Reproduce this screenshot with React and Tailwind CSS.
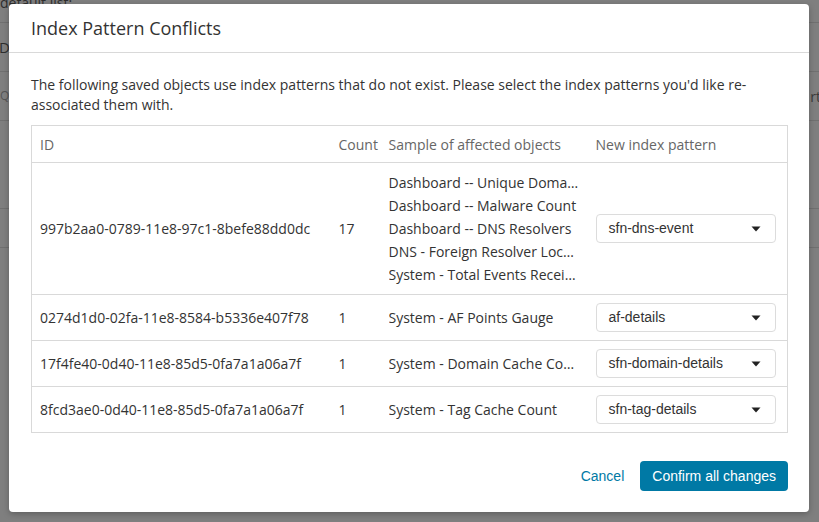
import React from "react";

const rows = [
  {
    id: "997b2aa0-0789-11e8-97c1-8befe88dd0dc",
    count: 17,
    samples: [
      "Dashboard -- Unique Domains Over Time",
      "Dashboard -- Malware Count",
      "Dashboard -- DNS Resolvers",
      "DNS - Foreign Resolver Locations",
      "System - Total Events Received",
    ],
    pattern: "sfn-dns-event",
  },
  {
    id: "0274d1d0-02fa-11e8-8584-b5336e407f78",
    count: 1,
    samples: ["System - AF Points Gauge"],
    pattern: "af-details",
  },
  {
    id: "17f4fe40-0d40-11e8-85d5-0fa7a1a06a7f",
    count: 1,
    samples: ["System - Domain Cache Count"],
    pattern: "sfn-domain-details",
  },
  {
    id: "8fcd3ae0-0d40-11e8-85d5-0fa7a1a06a7f",
    count: 1,
    samples: ["System - Tag Cache Count"],
    pattern: "sfn-tag-details",
  },
];

const Caret = () => (
  <svg width="10" height="6" viewBox="0 0 10 6" className="shrink-0">
    <path d="M0.5 0.5 L9.5 0.5 L5 5.5 Z" fill="#222" />
  </svg>
);

const PatternSelect = ({ value }) => (
  <div className="w-[180px] h-[29px] border border-[#dcdcdc] rounded-[4px] bg-white flex items-center justify-between pl-[12px] pr-[14px] font-['Liberation_Sans',Arial,sans-serif] text-[14px] text-[#333]">
    <span>{value}</span>
    <Caret />
  </div>
);

const App = () => {
  return (
    <div className="relative w-[819px] h-[522px] overflow-hidden bg-[#7f7f7f] font-['Open_Sans',sans-serif]">
      {/* page behind the overlay */}
      <div className="flex flex-col text-[#2e2e2e] text-[14px]">
        <div className="h-[25px] border-b border-[#707070] leading-[10px] -mt-[2px]">default list:</div>
        <div className="h-[49px] border-b border-[#707070] flex items-center justify-between">
          <span className="-ml-[1px] text-[15px]">D</span>
        </div>
        <div className="h-[49px] border-b border-[#707070] flex items-center justify-between">
          <span className="text-[12px] text-[#555]">Q</span>
          <span className="text-[#3a3a3a] mr-[-2px]">rt</span>
        </div>
        <div className="h-[88px] border-b border-[#707070]" />
        <div className="h-[39px] border-b border-[#707070]" />
      </div>

      {/* modal */}
      <div className="absolute left-[9px] top-[4px] w-[800px] h-[508px] bg-white rounded-[4px] shadow-[0_2px_6px_rgba(0,0,0,0.25)] flex flex-col">
        <div className="h-[49px] border-b border-[#d9d9d9] flex items-center px-[22px]">
          <h2 className="text-[18px] text-[#333]">Index Pattern Conflicts</h2>
        </div>

        <div className="px-[22px] pt-[22px] flex-1">
          <p className="text-[14px] leading-[20px] text-[#333] pr-[20px]">
            The following saved objects use index patterns that do not exist. Please select the index patterns you'd like re-associated them with.
          </p>

          <table className="mt-[10px] w-[757px] border border-[#d9d9d9] border-collapse text-[14px] table-fixed">
            <thead>
              <tr className="h-[37px] text-[#666] text-left">
                <th className="font-normal px-[8px] w-[299px]">ID</th>
                <th className="font-normal px-[8px] w-[50px]">Count</th>
                <th className="font-normal px-[8px] w-[207px]">Sample of affected objects</th>
                <th className="font-normal px-[8px]">New index pattern</th>
              </tr>
            </thead>
            <tbody className="text-[#333]">
              {rows.map((r) => (
                <tr key={r.id} className="border-t border-[#d9d9d9]">
                  <td className="px-[8px] py-[8px]">{r.id}</td>
                  <td className="px-[8px] py-[8px]">{r.count}</td>
                  <td className="px-[8px] py-[8px]">
                    {r.samples.map((s) => (
                      <div key={s} className="truncate leading-[23px] max-w-[190px]">
                        {s}
                      </div>
                    ))}
                  </td>
                  <td className="px-[8px] py-[8px]">
                    <PatternSelect value={r.pattern} />
                  </td>
                </tr>
              ))}
            </tbody>
          </table>
        </div>

        <div className="flex items-center justify-end gap-[16px] px-[21px] pb-[21px] font-['Liberation_Sans',Arial,sans-serif] text-[14px]">
          <button className="text-[#0079a5]">Cancel</button>
          <button className="h-[30px] px-[12px] rounded-[4px] bg-[#0079a5] text-white">Confirm all changes</button>
        </div>
      </div>
    </div>
  );
};

export default App;
